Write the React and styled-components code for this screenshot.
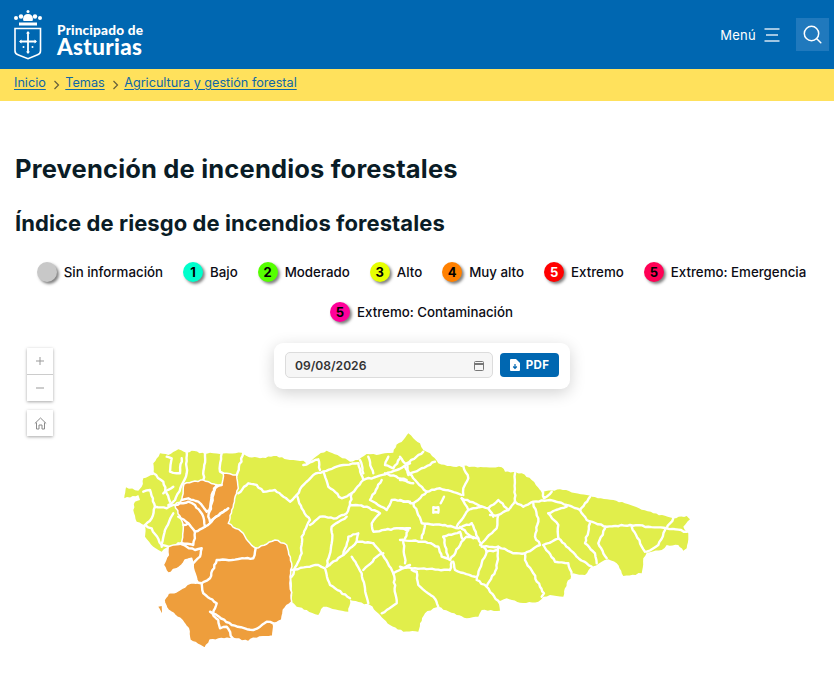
import React from 'react';
import styled, { createGlobalStyle } from 'styled-components';

const Global = createGlobalStyle`
  html, body { margin: 0; padding: 0; background: #fff; overflow: hidden; }
  body { font-family: Inter, "Liberation Sans", sans-serif; color: #0b1a22; }
`;

const Page = styled.div`
  width: 834px;
  height: 673px;
  overflow: hidden;
  display: flex;
  flex-direction: column;
`;

const Header = styled.header`
  height: 69px;
  flex: none;
  background: #0067b1;
  display: flex;
  align-items: center;
  justify-content: space-between;
  padding: 0 5px 0 14px;
`;

const Brand = styled.div`
  display: flex;
  align-items: center;
  gap: 15px;
`;

const BrandText = styled.div`
  display: flex;
  flex-direction: column;
  color: #fff;
  font-family: Lato, sans-serif;
  font-weight: 900;
  margin-top: 12px;
`;

const BrandSmall = styled.span`
  font-size: 13.6px;
  line-height: 13px;
  letter-spacing: 0.2px;
`;

const BrandBig = styled.span`
  font-size: 22.4px;
  line-height: 20px;
  letter-spacing: 0.35px;
`;

const Tools = styled.div`
  display: flex;
  align-items: center;
`;

const MenuLabel = styled.span`
  color: #fff;
  font-size: 13px;
  font-weight: 400;
  letter-spacing: 0.25px;
  margin-right: 8px;
`;

const SearchButton = styled.div`
  width: 33px;
  height: 33px;
  margin-left: 16px;
  background: #2079bd;
  display: flex;
  align-items: center;
  justify-content: center;
`;

const Crumbs = styled.nav`
  height: 32px;
  box-sizing: border-box;
  flex: none;
  background: #ffe15c;
  display: flex;
  align-items: center;
  padding: 0 14px 5px;
  font-size: 12.65px;
`;

const Crumb = styled.a`
  color: #0f67a5;
  text-decoration: underline;
  text-underline-offset: 2px;
`;

const CrumbSep = styled.svg`
  width: 7px;
  height: 10px;
  margin: 4px 5.5px 0 7px;
`;

const Main = styled.main`
  flex: 1;
  display: flex;
  flex-direction: column;
`;

const Title = styled.h1`
  margin: 52px 0 0 15px;
  font-family: Inter, sans-serif;
  font-weight: 700;
  font-size: 25.5px;
  line-height: 32px;
  letter-spacing: 0.18px;
  color: #0a1c26;
`;

const Subtitle = styled.h2`
  margin: 24px 0 0 15px;
  font-family: Inter, sans-serif;
  font-weight: 700;
  font-size: 22px;
  line-height: 28px;
  letter-spacing: 0.08px;
  color: #0a1c26;
`;

const Legend = styled.ul`
  list-style: none;
  margin: 23px 0 0;
  padding: 0 8px 0 17px;
  display: flex;
  flex-wrap: wrap;
  justify-content: center;
  column-gap: 20px;
  row-gap: 16px;
`;

const LegendItem = styled.li`
  display: flex;
  align-items: center;
  gap: 7px;
  height: 24px;
  font-size: 13.3px;
  font-weight: 500;
  color: #0b0b14;
  white-space: nowrap;
`;

const Dot = styled.span`
  width: 20px;
  height: 20px;
  border-radius: 50%;
  background: ${(p) => p.$bg};
  color: ${(p) => p.$fg || '#000'};
  box-shadow: 2px 2px 3px rgba(0, 0, 0, 0.5);
  display: flex;
  align-items: center;
  justify-content: center;
  font-size: 13px;
  font-weight: 700;
`;

const Stage = styled.section`
  position: relative;
  flex: 1;
  margin-top: 16px;
  padding: 85px 0 0 110px;
`;

const MapSvg = styled.svg`
  display: block;
  width: 590px;
  height: 230px;
`;

const ZoomGroup = styled.div`
  position: absolute;
  left: 27px;
  top: ${(p) => p.$top}px;
  width: 26px;
  background: #fff;
  box-shadow: 0 1px 3px rgba(0, 0, 0, 0.35);
  display: flex;
  flex-direction: column;
`;

const ZoomBtn = styled.div`
  height: 26px;
  display: flex;
  align-items: center;
  justify-content: center;
  & + & {
    border-top: 1px solid #ccc;
  }
`;

const DateCard = styled.div`
  position: absolute;
  left: 274px;
  top: 3px;
  width: 296px;
  height: 46px;
  box-sizing: border-box;
  padding: 0 11px 2px;
  background: #fff;
  border-radius: 9px;
  box-shadow: 0 4px 16px rgba(0, 0, 0, 0.18);
  display: flex;
  align-items: center;
  gap: 7px;
`;

const DateField = styled.div`
  width: 208px;
  height: 26px;
  box-sizing: border-box;
  background: #f6f6f6;
  border: 1px solid #dcdcdc;
  border-radius: 5px;
  padding: 0 8px 0 9px;
  display: flex;
  align-items: center;
  justify-content: space-between;
  font-size: 12.1px;
  font-weight: 600;
  color: #333;
`;

const PdfButton = styled.div`
  width: 59px;
  height: 24px;
  background: #0067b1;
  border-radius: 4px;
  color: #fff;
  font-size: 11.5px;
  font-weight: 700;
  letter-spacing: 0.4px;
  display: flex;
  align-items: center;
  justify-content: center;
  gap: 6px;
`;

const Land = styled.path`
  fill: ${(p) => p.$fill};
  stroke: #fff;
  stroke-width: ${(p) => p.$sw ?? 2};
  stroke-linejoin: round;
`;

const Border = styled.path`
  fill: none;
  stroke: #fff;
  stroke-width: 2.4;
  stroke-linejoin: round;
  stroke-linecap: round;
`;

const from = (ox, oy) => (s) =>
  s.trim().split(/\s+/).map((p) => {
    const [x, y] = p.split(',').map(Number);
    return [ox + x / 3, oy + y / 3];
  });
const z5 = from(110, 430);
const z6 = from(400, 430);
const z7 = from(290, 425);

const noise = (x, y) => {
  const v = Math.sin(x * 12.9898 + y * 78.233) * 43758.5453;
  return (v - Math.floor(v)) * 2 - 1;
};

// Roughens a straight run into the jagged raster edge of the map.
const wiggle = (pts) => {
  const out = [];
  for (let i = 0; i < pts.length - 1; i += 1) {
    const [ax, ay] = pts[i];
    const [bx, by] = pts[i + 1];
    const len = Math.hypot(bx - ax, by - ay);
    const steps = Math.max(1, Math.round(len / 3));
    for (let s = 0; s < steps; s += 1) {
      const t = s / steps;
      const x = ax + (bx - ax) * t;
      const y = ay + (by - ay) * t;
      const k = s === 0 ? 0 : noise(x, y) * 0.7;
      out.push([x - ((by - ay) / (len || 1)) * k, y + ((bx - ax) / (len || 1)) * k]);
    }
  }
  out.push(pts[pts.length - 1]);
  return out;
};
const fmt = (pts) => wiggle(pts).map(([x, y]) => `${x.toFixed(1)},${y.toFixed(1)}`).join('L');
const closed = (pts) => `M${fmt([...pts, pts[0]])}Z`;
const open = (pts) => `M${fmt(pts)}`;

const silhouette = closed([
  ...z5(`43,205 48,172 85,182 95,170 100,145 130,135 130,100 150,70 175,75 205,58 230,68 245,62 285,72 300,68 330,72 395,68 410,78 450,85 500,78 540,90 580,92 590,105 625,75 650,62 690,80 720,95 745,90 770,72 800,75 850,68 860,45`),
  ...z7(`315,65 340,45 355,25 370,40 390,55 400,75 420,85 445,115 490,125 525,125`),
  ...z6(`190,108 250,112 305,112 315,125 365,130 395,150 420,180 430,185 480,178 560,195 575,200 640,210 700,228 760,250 820,265 860,258 870,268 850,290 865,310 860,355 850,362 835,345 800,345 785,360 740,368 730,385 725,430 670,438 650,400 625,388 605,395 570,415 555,435 520,430 500,460 490,500 450,495 430,500 415,515 360,518 320,505 295,515 300,542 245,540 235,560 200,565 170,555 115,530 100,535 75,550 60,580 55,605 10,605`),
  ...z5(`840,585 810,555 780,525 720,510 715,545 640,530 625,555 590,540 560,530 545,515 545,440 440,355 350,280 260,320 175,350 155,365 130,350 105,320 105,285 80,275 70,240 75,215 90,210 85,195`),
]);

const orangeUnion = `340,130 380,135 385,175 365,240 355,280 400,310 420,340 437,355 495,330 530,345 545,400 540,440 545,515 520,540 515,570 490,580 490,600 488,618 430,625 415,635 368,625 300,630 285,655 240,630 235,595 210,565 175,540 162,510 175,490 200,485 240,460 265,458 255,430 250,400 245,385 225,390 215,405 175,430 160,405 175,375 175,350 215,340 220,285 195,225 215,210 222,162 280,150 320,165 335,165`;

const orangeLines = [
  `320,165 305,195 298,240 290,245 265,215 235,205 215,210`,
  `335,165 312,175 305,220 295,260 300,275 340,245 355,235`,
  `195,225 235,215 255,225 280,260 285,290 255,305 235,280 205,260`,
  `220,285 235,280`,
  `255,305 250,345 215,340`,
  `285,290 345,240`,
  `205,340 230,350 255,360 275,355 270,380 250,400`,
  `437,355 430,385 395,385 365,390 320,390 300,445 275,460 265,458`,
  `275,460 280,490 320,520 310,550 365,585 430,600 450,590 470,575 490,580`,
  `310,550 300,545 325,570 330,595 350,590 368,625`,
];

const yellowLinesLeft = [
  `400,70 380,135`,
  `385,190 415,160 440,165 460,185 495,180 520,200 540,215 560,195 575,170 610,135 640,125 700,105 745,100`,
  `580,105 625,88 630,120`,
  `560,195 575,235 600,270 575,320 575,370 545,440`,
  `545,420 600,410 625,405 645,415 660,465 720,505`,
  `600,285 630,260 680,265 710,250 720,225 770,230 810,250 785,280 790,305 860,295 900,295`,
  `710,260 665,290 665,340 650,410`,
  `650,410 700,375 740,335 790,340`,
  `700,375 715,320 745,310 740,335`,
  `725,380 755,430 775,520`,
  `790,340 815,370 850,430 860,520 815,550`,
  `760,420 800,380 820,370`,
  `850,430 900,405`,
  `720,225 725,190 760,150 745,100`,
  `640,125 655,170 695,205 725,190`,
  `760,150 800,140 860,120 900,100`,
  `750,90 760,130`,
  `775,80 790,130`,
  `815,150 780,210 830,240 845,210 900,215`,
  `825,130 890,150`,
  `835,80 825,105 850,115 870,85`,
  `230,65 230,130 215,165 195,210 175,225`,
  `285,70 280,150`,
  `335,70 330,125 340,130`,
  `170,80 185,85 180,125 210,130 215,85`,
  `130,130 160,155 170,190 180,215`,
  `100,185 120,180 135,230 125,265 105,285`,
  `135,230 170,235 190,225`,
  `190,250 165,300 155,350`,
  `105,285 125,295 155,345 175,350`,
  `160,190 190,170`,
];

const yellowLinesRight = [
  `190,108 205,145 190,175 190,195`,
  `70,65 20,100 25,135 105,95`,
  `0,80 15,100`,
  `15,110 45,150 80,185 120,175 185,195`,
  `0,150 40,160`,
  `80,185 40,220 0,210`,
  `40,220 65,280 135,285 175,295 215,280`,
  `185,205 205,240 170,290`,
  `185,205 235,225 265,235 295,210 325,240 295,255 270,255`,
  `205,240 245,230`,
  `265,235 280,260`,
  `295,255 290,295 255,330 240,345`,
  `215,280 245,350`,
  `345,130 345,215 370,230 400,215 450,210 500,225 540,240 570,200`,
  `345,215 325,240`,
  `400,220 415,265 405,320 420,345 375,370 340,370 295,350 250,350`,
  `445,250 500,230`,
  `445,250 475,285 475,325 430,345`,
  `475,325 530,380 575,410`,
  `430,345 465,395 505,400 515,435`,
  `375,370 375,390 400,430 420,470 432,490 425,500`,
  `540,240 560,270 620,290 690,285 800,295 860,305`,
  `800,295 820,265`,
  `570,280 555,340 585,370 590,400`,
  `615,295 595,340 620,385`,
  `695,290 735,365`,
  `795,300 775,345 740,365`,
  `425,180 432,205 455,185`,
  `295,350 290,415 260,470 300,520`,
  `260,365 245,400 230,450 260,470`,
  `250,350 260,365 290,360`,
  `160,395 165,420 225,440`,
  `0,330 75,335 115,350 125,380 150,390 190,330 200,320 235,325`,
  `75,285 65,325`,
  `130,320 145,385`,
  `130,320 180,305 190,330`,
  `180,290 220,325`,
  `0,410 45,415 150,420 155,395`,
  `50,425 55,465 100,500 115,530`,
  `50,425 35,420`,
  `10,330 15,400`,
  `0,295 25,300 15,325`,
  `100,232 115,232 115,248 100,248 100,232`,
  `122,220 132,200`,
];

const RiskMap = () => (
  <MapSvg viewBox="110 425 590 230" aria-label="Mapa de riesgo">
    <Land d={silhouette} $fill="#e1ee4b" $sw={0} />
    {yellowLinesLeft.map((l) => <Border key={l} d={open(z5(l))} />)}
    {yellowLinesRight.map((l) => <Border key={l} d={open(z6(l))} />)}
    <Land d={closed(z5(orangeUnion))} $fill="#ee9e3c" $sw={1.5} />
    <Land d={closed(z5('145,530 155,528 156,550'))} $fill="#ee9e3c" $sw={0} />
    {orangeLines.map((l) => <Border key={l} d={open(z5(l))} />)}
  </MapSvg>
);

const Logo = () => (
  <svg width="28" height="50" viewBox="0 0 28 50" fill="none">
    <g fill="#fff">
      <circle cx="2" cy="8" r="2" />
      <circle cx="7" cy="6.5" r="2.2" />
      <circle cx="21" cy="6.5" r="2.2" />
      <circle cx="26" cy="8" r="2" />
      <circle cx="14" cy="1.5" r="1.5" />
      <path d="M9 9 Q9.5 4 14 4 Q18.5 4 19 9 L18.5 11 H9.5 Z" />
      <rect x="5" y="12.5" width="18" height="3" />
    </g>
    <path d="M1 18.5 H26.5 V41 Q26.5 44 23 45 L14 48.7 L4.5 45 Q1 44 1 41 Z" stroke="#fff" strokeWidth="1.6" />
    <path d="M14 22 V43 M6 31.5 H22" stroke="#fff" strokeWidth="1.8" />
    <path d="M14 21 l-2 2.5 h4 Z M14 44 l-2 -2.5 h4 Z M5 31.5 l2.5 -2 v4 Z M23 31.5 l-2.5 -2 v4 Z" fill="#fff" />
    <circle cx="9.5" cy="37" r="1" fill="#fff" />
    <circle cx="18.5" cy="37" r="1" fill="#fff" />
  </svg>
);

const legend = [
  { label: 'Sin información', bg: '#c8c8c8', n: '' },
  { label: 'Bajo', bg: '#0fc', n: '1' },
  { label: 'Moderado', bg: '#5f0', n: '2' },
  { label: 'Alto', bg: '#e6ff00', n: '3' },
  { label: 'Muy alto', bg: '#ff8000', n: '4' },
  { label: 'Extremo', bg: '#f00', n: '5', fg: '#fff' },
  { label: 'Extremo: Emergencia', bg: '#ff0055', n: '5' },
  { label: 'Extremo: Contaminación', bg: '#ff0099', n: '5' },
];

const Chevron = () => (
  <CrumbSep viewBox="0 0 7 10" fill="none">
    <path d="M1.5 1 L5.5 5 L1.5 9" stroke="#665f3a" strokeWidth="1.2" />
  </CrumbSep>
);

export default function App() {
  return (
    <Page>
      <Global />
      <Header>
        <Brand>
          <Logo />
          <BrandText>
            <BrandSmall>Principado de</BrandSmall>
            <BrandBig>Asturias</BrandBig>
          </BrandText>
        </Brand>
        <Tools>
          <MenuLabel>Menú</MenuLabel>
          <svg width="16" height="14" viewBox="0 0 16 14" fill="none" stroke="#d5e6f3" strokeWidth="1.4">
            <path d="M0.5 1 H15.5 M2 7 H14 M0.5 13 H15.5" />
          </svg>
          <SearchButton>
            <svg width="19" height="19" viewBox="0 0 19 19" fill="none" stroke="#fff" strokeWidth="1.5" strokeLinecap="round">
              <circle cx="8.5" cy="8.5" r="7.2" />
              <path d="M13.8 13.8 L17.8 17.8" />
            </svg>
          </SearchButton>
        </Tools>
      </Header>
      <Crumbs>
        <Crumb>Inicio</Crumb>
        <Chevron />
        <Crumb>Temas</Crumb>
        <Chevron />
        <Crumb>Agricultura y gestión forestal</Crumb>
      </Crumbs>
      <Main>
        <Title>Prevención de incendios forestales</Title>
        <Subtitle>Índice de riesgo de incendios forestales</Subtitle>
        <Legend>
          {legend.map((l) => (
            <LegendItem key={l.label}>
              <Dot $bg={l.bg} $fg={l.fg}>{l.n}</Dot>
              {l.label}
            </LegendItem>
          ))}
        </Legend>
        <Stage>
          <ZoomGroup $top={8}>
            <ZoomBtn>
              <svg width="10" height="10" viewBox="0 0 10 10" stroke="#999" strokeWidth="1"><path d="M5 1 V9 M1 5 H9" /></svg>
            </ZoomBtn>
            <ZoomBtn>
              <svg width="10" height="10" viewBox="0 0 10 10" stroke="#999" strokeWidth="1"><path d="M1 5 H9" /></svg>
            </ZoomBtn>
          </ZoomGroup>
          <ZoomGroup $top={70}>
            <ZoomBtn>
              <svg width="13" height="13" viewBox="0 0 13 13" fill="none" stroke="#8a8a8a" strokeWidth="1">
                <path d="M0.8 6.5 L6.5 1 L12.2 6.5 M2.5 5.5 V12 H5 V8 H8 V12 H10.5 V5.5" />
              </svg>
            </ZoomBtn>
          </ZoomGroup>
          <DateCard>
            <DateField>
              09/08/2026
              <svg width="10" height="11" viewBox="0 0 10 11" fill="none" stroke="#777" strokeWidth="1">
                <rect x="0.5" y="1.5" width="9" height="9" rx="1" />
                <path d="M0.5 4 H9.5" strokeWidth="2" />
              </svg>
            </DateField>
            <PdfButton>
              <svg width="10" height="12" viewBox="0 0 10 12">
                <path fill="#fff" d="M1 0 H6 L10 4 V11 Q10 12 9 12 H1 Q0 12 0 11 V1 Q0 0 1 0 Z" />
                <path d="M5 5 V9 M3.2 7.5 L5 9.4 L6.8 7.5" stroke="#0067b1" strokeWidth="1.2" fill="none" />
              </svg>
              PDF
            </PdfButton>
          </DateCard>
          <RiskMap />
        </Stage>
      </Main>
    </Page>
  );
}
